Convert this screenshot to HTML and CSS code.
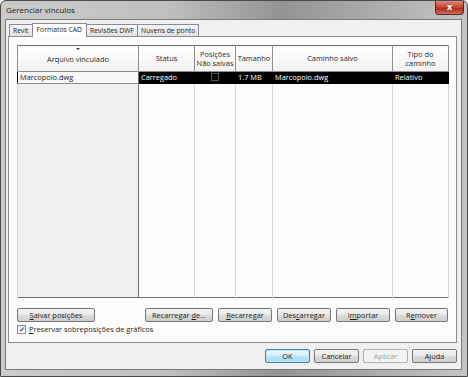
FILE: index.html
```html
<!DOCTYPE html>
<html lang="pt-BR">
<head>
    <meta charset="UTF-8">
    <title>Gerenciar vínculos</title>
    <link rel="stylesheet" href="styles.css">
</head>
<body>
    <div class="window">
        <div class="titlebar">
            <span class="title">Gerenciar vínculos</span>
            <div class="close-btn">x</div>
        </div>
        <div class="client">
            <div class="tabs">
                <div class="tab">Revit</div>
                <div class="tab active">Formatos CAD</div>
                <div class="tab">Revisões DWF</div>
                <div class="tab">Nuvens de ponto</div>
            </div>
            <div class="panel">
                <table class="grid">
                    <colgroup>
                        <col style="width: 121px">
                        <col style="width: 56px">
                        <col style="width: 41px">
                        <col style="width: 37px">
                        <col style="width: 120px">
                        <col style="width: 56px">
                    </colgroup>
                    <thead>
                        <tr>
                            <th class="sorted"><span class="sort-arrow"></span>Arquivo vinculado</th>
                            <th>Status</th>
                            <th>Posições<br>Não salvas</th>
                            <th>Tamanho</th>
                            <th>Caminho salvo</th>
                            <th>Tipo do<br>caminho</th>
                        </tr>
                    </thead>
                    <tbody>
                        <tr class="selected">
                            <td class="name">Marcopolo.dwg</td>
                            <td>Carregado</td>
                            <td class="center"><span class="cell-check"></span></td>
                            <td>1.7 MB</td>
                            <td>Marcopolo.dwg</td>
                            <td>Relativo</td>
                        </tr>
                        <tr class="filler">
                            <td class="name"></td>
                            <td></td>
                            <td></td>
                            <td></td>
                            <td></td>
                            <td></td>
                        </tr>
                    </tbody>
                </table>
                <div class="actions">
                    <button class="btn btn-save"><u>S</u>alvar posições</button>
                    <div class="actions-right">
                        <button class="btn btn-wide">Recarregar <u>d</u>e...</button>
                        <button class="btn"><u>R</u>ecarregar</button>
                        <button class="btn">Des<u>c</u>arregar</button>
                        <button class="btn">I<u>m</u>portar</button>
                        <button class="btn btn-remove">R<u>e</u>mover</button>
                    </div>
                </div>
                <label class="check-row">
                    <span class="checkbox">&#10003;</span>
                    <span><u>P</u>reservar sobreposições de gráficos</span>
                </label>
            </div>
            <div class="footer">
                <button class="btn btn-dialog btn-default">OK</button>
                <button class="btn btn-dialog">Cancelar</button>
                <button class="btn btn-dialog" disabled>Aplicar</button>
                <button class="btn btn-dialog">Ajuda</button>
            </div>
        </div>
    </div>
</body>
</html>
```

FILE: styles.css
```css
body {
    margin: 0;
    background-color: #ffffff;
    font-family: "Open Sans", "Noto Sans", sans-serif;
    font-size: 8px;
    color: #1e1e1e;
}
.window {
    width: 468px;
    height: 377px;
    box-sizing: border-box;
    display: flex;
    flex-direction: column;
    border: 1px solid #4a4a4a;
    border-radius: 6px 6px 0 0;
    background: linear-gradient(90deg, #cbcbcb 0%, #c0c0c0 35%, #939393 60%, #ababab 80%, #c4c4c4 100%);
    padding: 0 5px 6px 4px;
}
.titlebar {
    height: 18px;
    display: flex;
    align-items: center;
    justify-content: space-between;
}
.title {
    color: #202020;
    font-size: 8px;
    padding-left: 1px;
    margin-top: -1px;
}
.close-btn {
    width: 27px;
    height: 13px;
    margin-top: -4px;
    margin-right: -2px;
    border: 1px solid #5a2a2a;
    border-top: none;
    border-radius: 0 0 4px 4px;
    background: linear-gradient(#e08a7c, #c1402f 50%, #b0301f 60%, #d0705d);
    color: #ffffff;
    font-weight: bold;
    font-size: 9px;
    line-height: 11px;
    text-align: center;
}
.client {
    flex: 1;
    display: flex;
    flex-direction: column;
    background-color: #f0f0f0;
    border: 1px solid #7a7a7a;
    padding: 3px 4px 0 2px;
}
.tabs {
    display: flex;
    align-items: flex-end;
    height: 13px;
    padding-left: 1px;
    position: relative;
    z-index: 1;
}
.tab {
    height: 11px;
    line-height: 11px;
    padding: 0 3px;
    border: 1px solid #898c95;
    border-bottom: none;
    border-right: none;
    background: linear-gradient(#f6f6f6, #e2e2e2);
    font-size: 6.8px;
}
.tab:last-child {
    border-right: 1px solid #898c95;
}
.tab.active {
    height: 13px;
    line-height: 12px;
    background: #ffffff;
    border-right: 1px solid #898c95;
    margin-bottom: -1px;
    padding: 0 4px;
}
.tab.active + .tab {
    border-left: none;
}
.panel {
    height: 307px;
    box-sizing: border-box;
    background-color: #fcfcfc;
    border: 1px solid #898c95;
    padding: 8px 8px 0 8px;
}
.grid {
    width: 431px;
    height: 253px;
    table-layout: fixed;
    border-collapse: collapse;
    border: 1px solid #6e6e6e;
    font-size: 7.4px;
}
.grid th {
    height: 23px;
    padding: 0;
    font-weight: normal;
    line-height: 9px;
    background: linear-gradient(#ffffff, #f1f1f1);
    border: 1px solid #8e8e8e;
    border-top: none;
    text-align: center;
    vertical-align: middle;
    color: #2a2a2a;
}
.grid th.sorted {
    position: relative;
    padding-top: 2px;
}
.sort-arrow {
    position: absolute;
    top: 2px;
    left: 50%;
    margin-left: -2px;
    border-left: 2px solid transparent;
    border-right: 2px solid transparent;
    border-top: 2px solid #3a3a3a;
}
.grid td {
    padding: 0 2px;
    border-left: 1px solid #d2d2d2;
    border-right: 1px solid #d2d2d2;
    white-space: nowrap;
    overflow: hidden;
}
.grid td.name {
    background-color: #f0f0f0;
    border-right: 1px solid #6e6e6e;
}
.grid tr.selected td {
    height: 11px;
    line-height: 11px;
    background-color: #000000;
    color: #ffffff;
    border-color: #000000;
}
.grid tr.selected td.name {
    background-color: #f8f8f8;
    color: #1e1e1e;
    border-bottom: 1px solid #8e8e8e;
    border-right: 1px solid #6e6e6e;
}
.grid td.center {
    text-align: center;
}
.cell-check {
    display: inline-block;
    width: 6px;
    height: 6px;
    border: 1px solid #5a5a5a;
    vertical-align: middle;
    margin-top: -2px;
}
.grid tr.filler td {
    height: auto;
}
.actions {
    display: flex;
    justify-content: space-between;
    margin-top: 10px;
}
.actions-right {
    display: flex;
    gap: 5px;
}
.btn {
    height: 14px;
    box-sizing: border-box;
    padding: 0;
    border: 1px solid #767676;
    border-radius: 2px;
    background: linear-gradient(#f4f4f4 0%, #ebebeb 45%, #dcdcdc 50%, #cfcfcf 100%);
    font-family: "Open Sans", "Noto Sans", sans-serif;
    font-size: 7.4px;
    line-height: 11px;
    color: #1e1e1e;
    text-align: center;
}
.btn u {
    text-underline-offset: 1px;
}
.btn-save {
    width: 78px;
}
.actions-right .btn {
    width: 54px;
}
.actions-right .btn-wide {
    width: 68px;
}
.actions-right .btn-remove {
    width: 53px;
}
.check-row {
    display: flex;
    align-items: center;
    gap: 3px;
    margin-top: 2px;
    font-size: 7.4px;
    color: #1e1e1e;
}
.checkbox {
    width: 7px;
    height: 7px;
    border: 1px solid #8e8f8f;
    background: linear-gradient(#e6e6e6, #ffffff);
    color: #2a4f8a;
    font-size: 7px;
    line-height: 7px;
    text-align: center;
    font-weight: bold;
}
.footer {
    display: flex;
    justify-content: flex-end;
    gap: 4px;
    padding-top: 6px;
}
.btn-dialog {
    width: 45px;
}
.btn-default {
    border-color: #3c7fb1;
    box-shadow: inset 0 0 0 1px #bfe6f8;
    background: linear-gradient(#eaf6fd 0%, #d9f0fc 45%, #bee6fd 50%, #a7d9f5 100%);
}
.btn:disabled {
    border-color: #adb2b5;
    background: #f4f4f4;
    color: #a0a0a0;
}
```
